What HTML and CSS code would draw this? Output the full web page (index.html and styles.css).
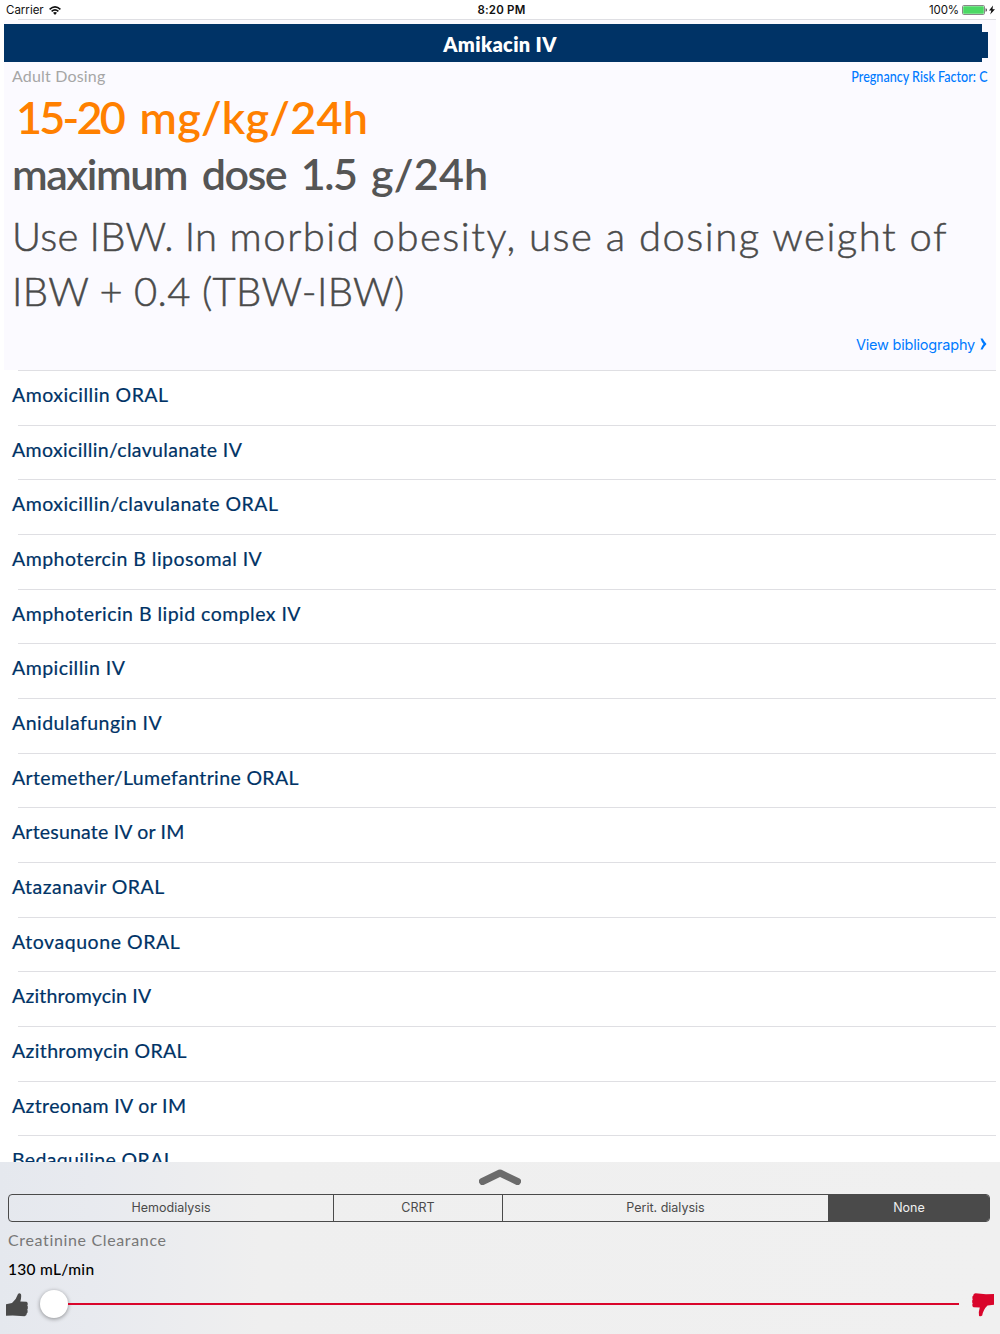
FILE: index.html
```html
<!DOCTYPE html>
<html lang="en">
<head>
<meta charset="utf-8">
<title>Adult Dosing</title>
<link rel="stylesheet" href="styles.css">
</head>
<body>
<div class="screen">
  <header class="status">
    <div class="carrier">Carrier
      <svg class="wifi" viewBox="0 0 12 9" width="12" height="9"><g fill="none" stroke="#111" stroke-width="1.6"><path d="M.6 3.3Q6-1.5 11.4 3.3"/><path d="M2.6 5.4Q6 2.4 9.4 5.4"/></g><path d="M4 6.8Q6 5.2 8 6.8L6 8.9Z" fill="#111"/></svg>
    </div>
    <div class="clock">8:20 PM</div>
    <div class="power">100%
      <svg class="battery" viewBox="0 0 33 10" width="33" height="10"><rect x=".5" y=".5" width="22" height="9" rx="1.2" fill="#fff" stroke="#888"/><rect x="1.2" y="1.2" width="20.6" height="7.6" rx=".6" fill="#4cd964"/><path d="M23.6 3.3q1.3.2 1.3 1.7t-1.3 1.7z" fill="#333"/><path d="M31 .6 27 5.6h2.4L28.2 9.4l4.8-5.2h-2.5z" fill="#111"/></svg>
    </div>
  </header>
  <main class="content">
    <section class="drug">
      <h1 class="title">Amikacin IV</h1>
      <div class="meta"><span class="adult">Adult Dosing</span><a class="risk">Pregnancy Risk Factor: C</a></div>
      <p class="dose"><span class="range">15-20</span> mg/kg/24h</p>
      <p class="max">maximum dose 1.5 <span class="per-day">g/24h</span></p>
      <p class="note"><span class="note-lead">Use IBW. In</span><span class="note-first"> morbid obesity, use a dosing weight of</span><br><span class="note-second">IBW + 0.4 (TBW-IBW)</span></p>
      <a class="biblio">View bibliography <svg viewBox="0 0 7 12" width="7" height="12"><path d="M.5.5H2.6Q4.200 3.600 6.500 6 4.200 8.400 2.600 11.500H.5Q1.500 8.200 3.500 6 1.500 3.800.5.5Z" fill="#007aff"/></svg></a>
    </section>
    <ul class="list">
      <li>Amoxicillin ORAL</li>
      <li class="snug">Amoxicillin/clavulanate IV</li>
      <li>Amoxicillin/clavulanate ORAL</li>
      <li>Amphotercin B liposomal IV</li>
      <li>Amphotericin B lipid complex IV</li>
      <li>Ampicillin IV</li>
      <li>Anidulafungin IV</li>
      <li class="snug">Artemether/Lumefantrine ORAL</li>
      <li class="tight">Artesunate IV or IM</li>
      <li>Atazanavir ORAL</li>
      <li class="wide">Atovaquone ORAL</li>
      <li class="tight">Azithromycin IV</li>
      <li class="snug">Azithromycin ORAL</li>
      <li class="snug">Aztreonam IV or IM</li>
      <li class="snug">Bedaquiline ORAL</li>
    </ul>
  </main>
  <footer class="panel">
    <svg class="handle" viewBox="0 0 42 16" width="42" height="16"><path d="M3.500 12.500 21 4 38.500 12.500" fill="none" stroke="#6b6b6b" stroke-width="7" stroke-linecap="round" stroke-linejoin="round"/></svg>
    <div class="segments"><span>Hemodialysis</span><span>CRRT</span><span>Perit. dialysis</span><span class="selected">None</span></div>
    <div class="label">Creatinine Clearance</div>
    <div class="value">130 mL/min</div>
    <div class="slider">
      <svg class="thumb up" viewBox="0 0 22 24" width="22" height="24"><path d="M0 11.300 6 10Q10.300 6.500 12 1Q13.500-.4 15 1.200Q15.600 4 14.300 8.600L20.500 8.700Q22 9.400 21.700 11.500L21.300 12.500 21.800 13.500V15.500L21.300 16.500 21.600 17.500V19.500L20.800 20.200Q21 23 18.500 23.200L6.700 22.400 0 22.800Z" fill="#4a4a4a"/></svg>
      <span class="knob"></span><span class="track"></span>
      <svg class="thumb down" viewBox="0 0 22 24" width="22" height="24"><path d="M22 11.700 15.500 12.600Q11.400 16.500 10.200 22.500Q8.700 24 7 22.800Q6.300 19 7.800 14.500L1.500 14.300Q0 13.600.3 11.500L.7 10.500.2 9.500V7.500L.7 6.500.4 5.500V3.500L1.200 2.800Q1.200.4 3.500.2L14 1.200 22 1Z" fill="#d9052b"/></svg>
    </div>
  </footer>
</div>
</body>
</html>
```
FILE: styles.css
```css
* { box-sizing: border-box; }
body { margin: 0; background: #fff; }
h1, p, ul { margin: 0; padding: 0; }
.screen {
  width: 1000px; height: 1334px; overflow: hidden;
  display: flex; flex-direction: column;
  font-family: Lato, "Open Sans", sans-serif; white-space: nowrap;
}
.status {
  height: 20px; flex: none; display: grid; grid-template-columns: 1fr auto 1fr;
  align-items: center; padding: 0 5px 0 6px;
  font: 11.5px/20px Inter, sans-serif; color: #111;
  background: linear-gradient(#dfdfe3, #dfdfe3) 18px 19px / 978px 1px no-repeat;
}
.carrier, .power { display: flex; align-items: center; }
.carrier { gap: 5px; }
.power { justify-content: flex-end; gap: 3px; letter-spacing: -.1px; }
.clock { font-weight: 600; letter-spacing: .2px; padding-left: 2px; }
.content { height: 1142px; flex: none; overflow: hidden; padding: 0 4px; }
.drug { height: 350px; background: #fbfaff; display: flex; flex-direction: column; padding-top: 4px; }
.title {
  height: 38px; margin-right: 8px; padding-left: 8px; text-align: center;
  background: #003366; color: #fff; font-size: 20px; line-height: 41px; font-weight: 800; letter-spacing: .35px;
  clip-path: polygon(0 0, calc(100% - 6px) 0, calc(100% - 6px) 8px, 100% 8px, 100% 34px, calc(100% - 6px) 34px, calc(100% - 6px) 100%, 0 100%);
}
.meta { height: 28px; padding: 0 8px; display: flex; justify-content: space-between; line-height: 28px; }
.adult { color: #a6a6a6; font-size: 16px; letter-spacing: .18px; }
.risk { color: #007aff; font-size: 16px; font-weight: 500; transform: scaleX(.785); transform-origin: right; }
.dose { height: 56px; padding-left: 12px; font-size: 45px; line-height: 54px; font-weight: 600; color: #ff8000; letter-spacing: .2px; }
.range { letter-spacing: -2.8px; margin-right: 5px; }
.max { height: 58px; padding-left: 8px; font-size: 43px; line-height: 56px; font-weight: 600; color: #555; letter-spacing: -1.5px; word-spacing: 5.5px; }
.per-day { letter-spacing: .2px; }
.note { height: 110px; margin-top: 5px; padding-left: 8px; font-size: 40px; line-height: 55px; font-weight: 300; color: #4a4a4a; -webkit-text-stroke: .5px #4a4a4a; }
.note-lead { letter-spacing: .2px; }
.note-first { letter-spacing: 1.5px; }
.note-second { letter-spacing: .3px; }
.biblio {
  height: 28px; margin-top: 11px; padding-right: 9px; display: flex; align-items: center; justify-content: flex-end; gap: 5px;
  font: 14.5px Inter, sans-serif; letter-spacing: -.2px; color: #007aff;
}
.list { list-style: none; }
.list li {
  height: 54.66px; padding: 0 8px; color: #003366; font-size: 19.5px; line-height: 50px; font-weight: 400;
  letter-spacing: .47px; -webkit-text-stroke: .2px #003366;
  background: linear-gradient(#dfdfe3, #dfdfe3) 14px 0 / 100% 1px no-repeat;
}
.list .snug { letter-spacing: .36px; }
.list .tight { letter-spacing: .2px; }
.list .wide { letter-spacing: .56px; }
.panel {
  height: 172px; flex: none; display: flex; flex-direction: column; padding: 0 10px 0 8px;
  background: linear-gradient(90deg, #e5e8ee 0, #e8eaef 90px, #efefef 260px, #f0f0f0 100%);
}
.handle { align-self: center; margin: 7px -2px 9px 0; }
.segments {
  height: 28px; flex: none; display: grid; grid-template-columns: 324px 169px 326px 1fr;
  border: 1px solid #4a4a4a; border-radius: 4px; overflow: hidden;
  font: 12.5px/26px Inter, sans-serif; color: #4a4a4a; text-align: center;
}
.segments span + span { border-left: 1px solid #4a4a4a; }
.segments .selected { background: #4a4a4a; color: #f0f0f0; }
.label { height: 36px; line-height: 35px; font-size: 16px; color: #777; letter-spacing: .65px; }
.value { height: 24px; line-height: 23px; font-size: 15.5px; font-weight: 500; letter-spacing: .3px; color: #000; }
.slider { display: flex; align-items: center; height: 44px; margin: 0 -4px 0 -2px; }
.thumb { flex: none; position: relative; top: 1px; }
.knob { width: 28px; height: 28px; flex: none; margin-left: 12px; border-radius: 50%; background: #fff; box-shadow: 0 1px 4px rgba(0,0,0,.4); }
.track { flex: 1; height: 2px; margin-right: 13px; background: #d9052b; }
```
